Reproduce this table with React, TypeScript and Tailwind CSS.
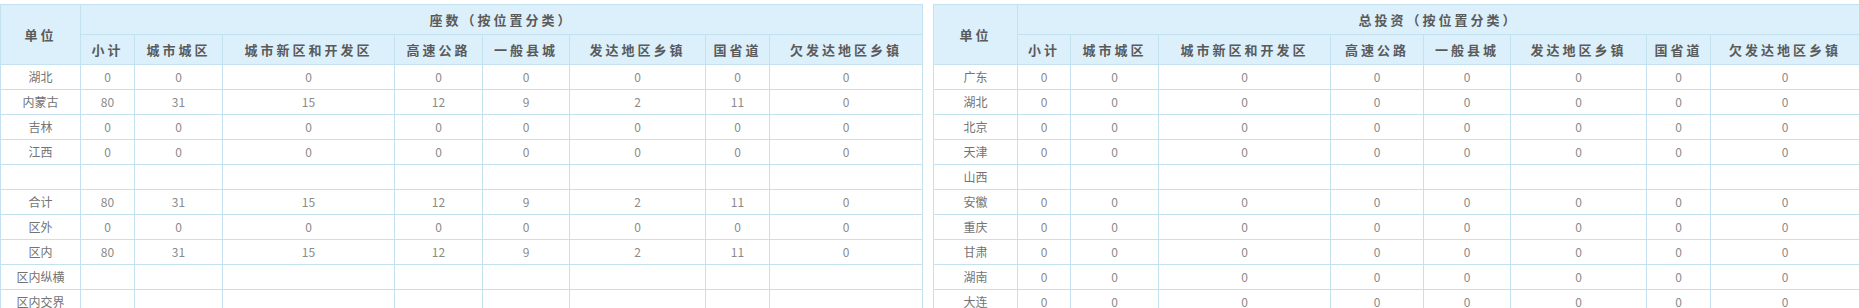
import React from "react";

const heads = ["小计", "城市城区", "城市新区和开发区", "高速公路", "一般县城", "发达地区乡镇", "国省道", "欠发达地区乡镇"];

type Row = { name: string; vals: (string | number)[] | null };

const leftRows: Row[] = [
  { name: "湖北", vals: [0, 0, 0, 0, 0, 0, 0, 0] },
  { name: "内蒙古", vals: [80, 31, 15, 12, 9, 2, 11, 0] },
  { name: "吉林", vals: [0, 0, 0, 0, 0, 0, 0, 0] },
  { name: "江西", vals: [0, 0, 0, 0, 0, 0, 0, 0] },
  { name: "", vals: null },
  { name: "合计", vals: [80, 31, 15, 12, 9, 2, 11, 0] },
  { name: "区外", vals: [0, 0, 0, 0, 0, 0, 0, 0] },
  { name: "区内", vals: [80, 31, 15, 12, 9, 2, 11, 0] },
  { name: "区内纵横", vals: null },
  { name: "区内交界", vals: null },
];

const rightNames = ["广东", "湖北", "北京", "天津", "山西", "安徽", "重庆", "甘肃", "湖南", "大连"];
const rightRows: Row[] = rightNames.map((n) => ({ name: n, vals: n === "山西" ? null : [0, 0, 0, 0, 0, 0, 0, 0] }));

function DataTable({ title, widths, rows, total }: { title: string; widths: number[]; rows: Row[]; total: number }) {
  return (
    <table
      className="table-fixed border-collapse shrink-0"
      style={{ width: total }}
    >
      <colgroup>
        {widths.map((w, i) => (
          <col key={i} style={{ width: w }} />
        ))}
      </colgroup>
      <thead>
        <tr className="h-[30px]">
          <th
            rowSpan={2}
            className="border border-[#c3e1ee] bg-[#dcf0fb] text-[13px] font-semibold text-[#5a5a5a] tracking-[3px] text-center align-middle"
          >
            单位
          </th>
          <th
            colSpan={8}
            className="border border-[#c3e1ee] bg-[#dcf0fb] text-[13px] font-semibold text-[#5a5a5a] tracking-[3px] text-center"
          >
            {title}
          </th>
        </tr>
        <tr className="h-[30px]">
          {heads.map((h) => (
            <th
              key={h}
              className="border border-[#c3e1ee] bg-[#dcf0fb] text-[13px] font-semibold text-[#5a5a5a] tracking-[3px] text-center whitespace-nowrap"
            >
              {h}
            </th>
          ))}
        </tr>
      </thead>
      <tbody>
        {rows.map((r, i) => (
          <tr key={i} className="h-[25px]">
            <td className="border border-[#c3e1ee] text-center text-[12px] text-[#737373] whitespace-nowrap">{r.name}</td>
            {Array.from({ length: 8 }).map((_, j) => (
              <td key={j} className="border border-[#c3e1ee] text-center text-[12px] text-[#8a8a8a]">
                {r.vals ? r.vals[j] : ""}
              </td>
            ))}
          </tr>
        ))}
      </tbody>
    </table>
  );
}

export default function App() {
  return (
    <div
      className="w-[1859px] h-[308px] overflow-hidden bg-white flex items-start gap-[10px] pt-[4px]"
      style={{ fontFamily: '"Noto Sans CJK SC", "Noto Sans", sans-serif' }}
    >
      <DataTable
        title="座数（按位置分类）"
        widths={[80, 54, 88, 172, 88, 87, 136, 64, 153]}
        total={922}
        rows={leftRows}
      />
      <DataTable
        title="总投资（按位置分类）"
        widths={[84, 53, 88, 172, 93, 87, 136, 64, 149]}
        total={926}
        rows={rightRows}
      />
    </div>
  );
}
